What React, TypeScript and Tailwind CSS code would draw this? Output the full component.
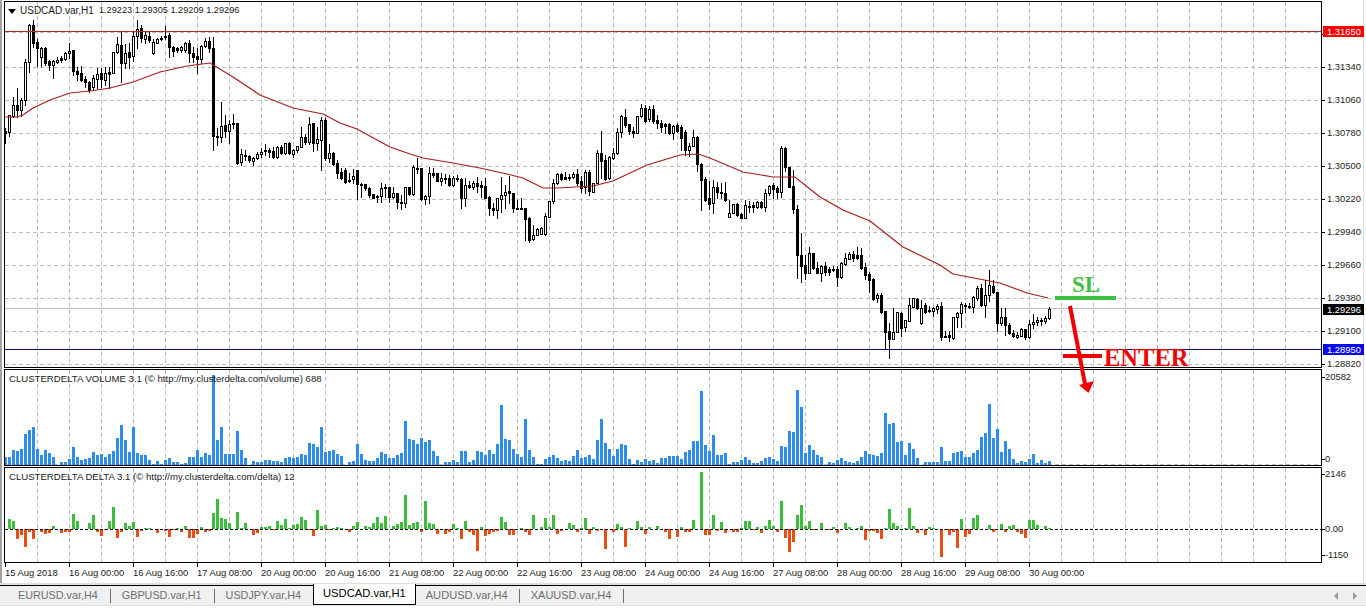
import React from 'react';

// hi, open, close, lo in screen pixels: open below close means a rising candle
const candles: number[][] = [
  [128,131,133,143],[115,132,115,136],[97,116,105,117],[88,105,110,117],[98,110,100,116],[59,100,62,105],[24,62,25,72],[20,25,43,47],
  [39,42,48,66],[47,57,48,66],[47,48,63,65],[60,61,65,70],[60,65,61,78],[57,62,60,63],[56,58,60,62],[52,59,53,60],
  [43,53,51,58],[50,50,71,75],[67,71,74,80],[66,73,80,81],[76,79,82,87],[81,82,90,92],[75,87,78,90],[68,79,74,88],
  [68,73,79,87],[67,80,73,85],[67,72,74,88],[52,73,52,73],[37,52,44,53],[32,45,63,82],[44,63,53,68],[43,52,57,68],
  [32,56,36,61],[20,36,29,48],[25,28,38,42],[32,39,35,43],[32,36,40,42],[39,53,42,54],[38,43,39,43],[36,38,39,40],
  [26,37,36,39],[33,35,47,57],[46,47,51,56],[47,48,50,52],[46,50,47,52],[42,50,43,52],[40,43,53,62],[47,53,57,62],
  [48,56,59,73],[45,59,46,63],[38,46,41,47],[37,41,48,52],[37,48,136,150],[128,136,137,145],[102,137,126,142],[115,125,131,137],
  [120,131,124,143],[114,123,124,128],[123,123,163,164],[149,162,154,165],[150,155,156,160],[155,156,160,162],[157,161,158,165],[152,158,154,159],
  [148,154,152,157],[144,150,151,155],[148,150,152,157],[147,151,157,158],[146,157,147,158],[145,147,153,154],[143,153,143,154],[142,143,153,154],
  [149,154,150,157],[146,150,146,152],[127,147,137,147],[134,137,142,144],[117,142,124,144],[123,123,143,151],[127,143,139,150],[117,140,120,170],
  [118,120,158,160],[144,158,153,162],[152,153,164,165],[160,163,173,178],
  [168,172,178,179],[168,170,182,183],[173,180,181,182],[169,179,176,183],[170,170,184,199],[183,184,185,197],[184,184,188,190],[187,188,195,197],
  [194,194,198,198],[195,197,196,202],[183,196,188,202],[184,188,187,197],[187,187,197,202],[187,197,193,198],[193,193,202,208],[195,202,203,209],
  [187,203,187,207],[187,187,194,195],[165,194,167,195],[158,168,169,173],[168,168,199,200],[195,199,196,204],[167,196,173,203],[168,173,175,177],
  [173,173,181,181],[173,181,178,185],[174,178,179,183],[175,178,185,186],[176,185,178,186],[175,178,179,181],[178,179,198,208],[178,198,185,206],
  [181,185,187,188],[181,187,183,189],[177,183,186,192],[181,185,187,197],[178,186,198,198],[196,197,208,215],[203,208,210,215],[198,210,198,218],
  [177,199,195,212],[185,195,192,208],[176,191,193,203],[193,193,208,212],[200,208,209,209],[198,208,209,209],[208,208,219,240],[217,218,240,242],
  [225,239,235,240],[228,235,229,235],[227,234,228,234],[213,234,216,235],[201,217,201,217],[179,201,183,203],[173,183,174,184],[173,174,179,180],
  [172,177,179,179],[174,177,177,180],[172,177,174,178],[169,174,183,185],[176,181,188,192],[170,187,172,193],[170,172,191,195],[183,192,183,192],
  [150,183,153,183],[131,153,161,178],[155,160,179,180],[156,178,157,179],[148,158,153,159],[128,153,132,154],[115,132,116,137],[109,117,125,127],
  [124,124,131,134],[127,131,133,137],[116,133,116,133],[104,116,108,117],[105,108,121,122],[106,119,109,121],[105,109,121,123],[115,120,123,128],
  [120,123,127,132],[123,124,126,133],[123,124,133,134],[125,133,126,139],[123,125,131,132],
  [125,127,138,150],[130,132,150,155],[143,150,146,156],[130,146,137,146],[136,137,164,171],[163,164,180,210],[177,179,200,201],[181,198,204,209],
  [180,203,187,213],[182,187,192,198],[183,192,193,198],[182,193,200,201],[200,217,213,217],[204,213,204,213],[203,204,215,216],[213,214,218,218],
  [200,218,205,218],[201,206,207,212],[202,205,207,212],[201,207,202,208],[201,202,207,208],[189,207,193,211],[185,193,186,195],[183,185,189,198],
  [186,188,192,198],[146,192,148,197],[147,148,167,171],[167,167,187,187],[170,186,209,213],[205,209,255,278],[233,255,266,282],[255,265,273,279],
  [247,273,253,273],[253,253,268,269],[262,268,273,273],[265,273,266,281],[262,266,272,275],[267,269,272,275],[266,269,270,271],[266,269,277,286],
  [262,277,263,278],[253,264,258,265],[252,259,254,259],[251,254,258,261],[247,255,258,259],[248,255,268,269],[263,267,275,279],[272,274,280,292],
  [278,279,299,300],[293,298,295,302],[293,295,312,313],[311,311,332,349],[323,331,339,358],[308,339,332,339],[312,332,312,332],[312,313,328,336],
  [320,327,320,331],[298,321,305,321],[298,307,298,307],[298,299,308,309],[300,323,308,324],[303,305,312,313],[306,310,311,312],[307,311,308,316],
  [304,309,306,313],[302,306,337,340],[331,336,337,337],[331,335,337,341],[317,338,317,339],[312,317,313,327],[302,313,304,327],[303,305,306,312],
  [303,306,307,308],[296,307,297,312],[286,298,288,300],[284,288,305,306],[280,305,295,317],[270,295,285,301],[280,286,292,293],[292,292,323,331],
  [308,323,317,325],[308,317,325,335],[323,325,333,334],[330,333,336,337],[332,337,335,338],
  [328,336,329,336],[329,329,337,339],[320,337,324,338],[314,324,322,328],[317,322,320,325],[318,320,321,325],[316,321,318,323],[307,318,309,319],
];

const maLine =
  '5,117 17,117 23,115 33,108 50,100 70,93 90,91 110,88 133,82 160,72 187,66 210,63 233,77 260,95 293,108 323,114 340,123 357,129 390,147 410,154 423,158 453,163 480,168 507,174 523,178 543,188 558,188 593,186 613,181 647,165 680,155 698,154 710,158 743,172 773,177 795,177 820,197 843,210 870,221 903,247 940,265 953,274 1000,283 1027,293 1048,298';

const volume: number[] = [
  8,8,15,14,16,31,35,38,16,10,15,12,8,0,3,3,6,18,8,5,6,7,13,10,11,8,11,14,27,40,25,13,38,12,10,10,5,1,4,1,5,7,3,3,1,2,8,8,15,8,12,10,90,25,38,11,11,11,34,15,7,0,4,3,3,5,5,4,4,3,7,8,7,8,11,10,22,21,18,38,13,14,15,11,
  9,0,3,4,21,11,5,4,4,7,13,11,7,7,10,12,44,26,25,21,27,23,25,14,9,0,3,3,5,3,14,14,3,5,14,13,10,15,11,21,60,26,25,16,11,8,46,15,8,1,1,6,8,10,7,4,5,4,9,15,7,8,10,6,25,46,22,16,9,16,21,20,6,1,5,3,6,4,5,2,7,7,9,9,9,
  6,13,15,24,24,74,20,14,30,10,10,12,1,3,3,5,8,5,2,2,4,7,8,6,4,19,18,34,33,75,58,12,20,15,10,8,0,3,2,5,7,4,3,2,4,8,14,11,10,9,12,52,41,42,23,24,10,22,16,7,0,3,3,3,3,18,4,4,12,13,14,8,8,12,15,28,32,61,27,36,13,24,16,6,2,
  4,3,6,11,2,5,2,4,
];

const delta: number[] = [
  0,10,8,-10,-6,-18,-3,-10,0,-3,-5,-4,3,0,-4,-3,-3,15,8,-1,0,6,14,-3,-7,-1,8,22,-9,-3,6,3,7,-8,-2,1,1,0,-4,0,-2,-8,-1,1,-3,3,-9,-9,-5,2,-3,-2,16,30,11,10,6,0,17,1,6,0,-6,-4,2,2,3,-1,8,4,10,1,4,5,12,9,-1,-7,19,3,4,-1,1,2,
  1,0,-3,3,7,0,3,2,6,12,6,13,0,3,5,7,34,4,6,7,-3,28,6,5,-5,0,-5,-3,5,1,-10,8,-3,-6,-22,2,-7,-5,-3,-2,12,7,-6,-6,0,1,-3,-6,14,0,2,11,2,14,-5,-2,0,6,4,-3,1,11,-5,2,-2,-1,-20,0,-3,5,2,-18,1,0,8,2,-5,2,0,3,0,-3,-10,0,-8,
  2,-3,-3,9,0,57,-6,-6,14,-2,7,-4,0,-3,-3,1,8,8,-1,2,-4,3,9,3,-3,28,-9,-23,-13,14,24,3,8,-1,0,6,0,-1,2,-4,-1,6,2,0,1,3,-11,-2,-2,-4,-10,1,20,6,3,-1,1,21,3,-4,0,-6,2,1,0,-28,-1,-6,-3,-19,10,-8,-5,11,14,0,0,4,-3,0,5,-3,3,4,-3,
  -5,-9,9,9,4,-1,3,1,
];

const vGrid = Array.from({ length: 40 }, (_, k) => 37 + k * 32);
const hGrid = [32, 67, 100, 133, 166, 199, 232, 265, 298, 331, 364];

const priceTicks = ['1.31620', '1.31340', '1.31060', '1.30780', '1.30500', '1.30220', '1.29940', '1.29660', '1.29380', '1.29100', '1.28820'];

const timeLabels = [
  '15 Aug 2018', '16 Aug 00:00', '16 Aug 16:00', '17 Aug 08:00', '20 Aug 00:00', '20 Aug 16:00', '21 Aug 08:00', '22 Aug 00:00', '22 Aug 16:00',
  '23 Aug 08:00', '24 Aug 00:00', '24 Aug 16:00', '27 Aug 08:00', '28 Aug 00:00', '28 Aug 16:00', '29 Aug 08:00', '30 Aug 00:00',
];

const VerticalGrid: React.FC<{ top: number; bottom: number }> = ({ top, bottom }) => (
  <>
    {vGrid.map((x) => (
      <line key={x} x1={x + 0.5} x2={x + 0.5} y1={top} y2={bottom} stroke="#bdbdbd" strokeDasharray="4 3" />
    ))}
  </>
);

const AxisRow: React.FC<{ label: string; wide?: boolean }> = ({ label, wide }) => (
  <div className="flex h-[12px] items-center">
    <span className="h-px w-[3px] bg-black" />
    <span className={wide ? 'ml-[2px]' : ''}>{label}</span>
  </div>
);

const Tab: React.FC<{ label: string; className?: string }> = ({ label, className }) => (
  <div className={`flex h-[14px] items-center border-r border-[#707070] text-[#6e6e6e] ${className}`}>{label}</div>
);

const App: React.FC = () => {
  return (
    <div className="relative flex h-[608px] w-[1366px] flex-col overflow-hidden bg-white font-['Liberation_Sans',sans-serif] text-[9.4px] leading-none text-[#222]">
      <div className="flex flex-1">
        <div className="w-[2px] bg-[#a3a3a3]" />
        <div className="ml-[2px] flex flex-1 flex-col pt-px">
          {/* Price pane */}
          <div className="flex h-[367px]">
            <div className="relative h-[367px] w-[1318px] border border-black">
              <svg width="1316" height="365" viewBox="5 2 1316 365" className="block">
                <VerticalGrid top={2} bottom={367} />
                {hGrid.map((y) => (
                  <line key={y} x1={5} x2={1321} y1={y + 0.5} y2={y + 0.5} stroke="#bdbdbd" strokeDasharray="4 3" />
                ))}
                <line x1={5} x2={1321} y1={308.5} y2={308.5} stroke="#c0c0c0" />
                <line x1={5} x2={1321} y1={349.5} y2={349.5} stroke="#0b0b7a" />
                {candles.map(([hi, open, close, lo], i) => {
                  const x = 5 + i * 4;
                  const top = Math.min(open, close);
                  const h = Math.max(Math.abs(open - close), 1);
                  return (
                    <g key={i} shapeRendering="crispEdges">
                      <rect x={x} y={hi} width={1} height={lo - hi + 1} fill="#000" />
                      {open > close ? (
                        <rect x={x - 0.5} y={top + 0.5} width={2} height={h} fill="#fff" stroke="#000" />
                      ) : (
                        <rect x={x - 1} y={top} width={3} height={h + 1} fill="#000" />
                      )}
                    </g>
                  );
                })}
                <line x1={5} x2={1321} y1={31.5} y2={31.5} stroke="#b82a2a" />
                <polyline points={maLine} fill="none" stroke="#a81c1c" strokeWidth={1.2} />
              </svg>
              <div className="absolute left-[3px] top-[4px] flex items-center text-[10px]">
                <svg width="8" height="5" viewBox="0 0 8 5" className="mr-[4px]">
                  <path d="M0 0h8L4 5z" fill="#000" />
                </svg>
                <span className="mr-[5px]">USDCAD.var,H1</span>
                <span className="text-[9.2px]">1.29223 1.29305 1.29209 1.29296</span>
              </div>
            </div>
            <div className="relative flex-1">
              <div className="mt-[27px] flex h-[342px] flex-col justify-between">
                {priceTicks.map((p) => (
                  <AxisRow key={p} label={p} wide />
                ))}
              </div>
            </div>
          </div>

          {/* Volume pane */}
          <div className="mt-px flex h-[97px]">
            <div className="relative h-[97px] w-[1318px] border border-black">
              <svg width="1316" height="95" viewBox="5 370 1316 95" className="block">
                <VerticalGrid top={370} bottom={465} />
                <line x1={5} x2={1321} y1={464.5} y2={464.5} stroke="#bdbdbd" strokeDasharray="4 3" />
                <g shapeRendering="crispEdges">
                  {volume.map((h, i) => (
                    <rect key={i} x={4 + i * 4} y={465 - h} width={3} height={h} fill="#2f8ce8" />
                  ))}
                </g>
              </svg>
              <span className="absolute left-[4px] top-[4px] text-[9.6px]">CLUSTERDELTA VOLUME 3.1 (© http://my.clusterdelta.com/volume) 688</span>
            </div>
            <div className="flex flex-1 flex-col justify-between pb-[1px] pt-[2px]">
              <AxisRow label="20582" />
              <AxisRow label="0" />
            </div>
          </div>

          {/* Delta pane */}
          <div className="mt-px flex h-[96px]">
            <div className="relative h-[96px] w-[1318px] border border-black">
              <svg width="1316" height="94" viewBox="5 468 1316 94" className="block">
                <VerticalGrid top={468} bottom={562} />
                <g shapeRendering="crispEdges">
                  {delta.map((d, i) => (
                    <rect key={i} x={4 + i * 4} y={d > 0 ? 529 - d : 529} width={3} height={Math.abs(d)} fill={d > 0 ? '#3cbe3c' : '#e84e14'} />
                  ))}
                </g>
                <line x1={5} x2={1321} y1={529.5} y2={529.5} stroke="#000" strokeDasharray="3 2" />
              </svg>
              <span className="absolute left-[4px] top-[4px] text-[9.6px]">CLUSTERDELTA DELTA 3.1 (© http://my.clusterdelta.com/delta) 12</span>
            </div>
            <div className="flex flex-1 flex-col pt-[1px]">
              <AxisRow label="2146" />
              <div className="mt-[43px]">
                <AxisRow label="0.00" />
              </div>
              <div className="mt-[14px]">
                <AxisRow label="-1150" />
              </div>
            </div>
          </div>

          {/* Time axis */}
          <div className="flex h-[20px] pl-px">
            {timeLabels.map((t) => (
              <div key={t} className="w-[64px] shrink-0">
                <div className="h-[4px] w-px bg-black" />
                <div className="mt-[1px] whitespace-nowrap">{t}</div>
              </div>
            ))}
          </div>
        </div>
        <div className="mr-[2px] w-px bg-[#dedede]" />
      </div>

      <div className="h-[2px] bg-[#dedede]" />

      {/* Symbol tabs */}
      <div className="flex h-[20px] items-center border-t border-black bg-[#f0f0f0] pl-[7px] text-[10.8px]">
        <Tab label="EURUSD.var,H4" className="pl-[11px] pr-[12px]" />
        <Tab label="GBPUSD.var,H1" className="pl-[11px] pr-[12px]" />
        <div className="pl-[11px] pr-[12px] text-[#6e6e6e]">USDJPY.var,H4</div>
        <div className="-mt-[2px] flex h-[21px] items-center self-start border-x border-b border-black bg-white px-[9px] text-[11.2px] text-black">USDCAD.var,H1</div>
        <Tab label="AUDUSD.var,H4" className="pl-[10px] pr-[11px] text-[11.1px]" />
        <Tab label="XAUUSD.var,H4" className="pl-[11px] pr-[12px] text-[11px]" />
        <div className="ml-auto mr-[9px] flex gap-[15px]">
          <svg width="4" height="8" viewBox="0 0 4 8"><path d="M4 0v8L0 4z" fill="#9c9c9c" /></svg>
          <svg width="4" height="8" viewBox="0 0 4 8"><path d="M0 0v8l4-4z" fill="#9c9c9c" /></svg>
        </div>
      </div>
      <div className="flex-1 border-t border-[#e2e2e2] bg-white" />

      {/* Price tags on the axis */}
      <div className="absolute left-[1323px] top-[26px] flex h-[11px] w-[41px] items-center bg-[#f00] pl-[4px] text-white">1.31650</div>
      <div className="absolute left-[1323px] top-[304px] flex h-[11px] w-[41px] items-center bg-black pl-[4px] text-white">1.29296</div>
      <div className="absolute left-[1323px] top-[344px] flex h-[11px] w-[41px] items-center bg-[#0a0aee] pl-[4px] text-white">1.28950</div>

      {/* Hand drawn trade marks */}
      <svg className="absolute left-0 top-0" width="1366" height="608" viewBox="0 0 1366 608">
        <rect x={1055} y={296} width={61} height={4} fill="#3cc23c" />
        <rect x={1063} y={354} width={39} height={4} fill="#f00000" />
        <line x1={1070} y1={306} x2={1085} y2={384} stroke="#f00000" strokeWidth={4} />
        <path d="M1079 385L1094 381L1088.5 393z" fill="#f00000" />
      </svg>
      <span className="absolute left-[1072px] top-[273px] font-['Liberation_Serif',serif] text-[23px] font-bold text-[#3cc23c]">SL</span>
      <span className="absolute left-[1104px] top-[346px] font-['Liberation_Serif',serif] text-[24.5px] font-bold text-[#f00000]">ENTER</span>
    </div>
  );
};

export default App;
